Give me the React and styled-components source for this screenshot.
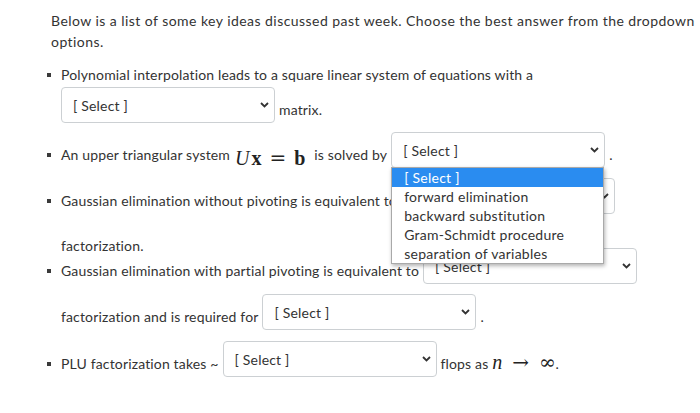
import React from "react";
import styled, { createGlobalStyle } from "styled-components";

const GlobalStyle = createGlobalStyle`
	body {
		margin: 0;
		background: #fff;
		font-family: Lato, "Liberation Sans", sans-serif;
		color: #333;
	}
`;

const Page = styled.div`
	padding: 10px 0 0 51px;
	font-size: 14px;
`;

const Intro = styled.p`
	margin: 0;
	width: 649px;
	line-height: 21px;
	letter-spacing: 0.45px;
`;

const List = styled.ul`
	list-style: none;
	margin: 12px 0 0;
	padding: 0 0 0 10px;
	letter-spacing: 0.15px;
`;

const Item = styled.li`
	margin-top: ${(p) => p.$mt || 0}px;
`;

const Row = styled.div`
	display: flex;
	align-items: center;
	gap: 4px;
	margin-top: ${(p) => p.$mt || 0}px;
`;

const Bullet = styled.span`
	width: 4px;
	height: 4px;
	background: #3a3a3a;
	margin: ${(p) => (p.$low ? 9 : 0)}px 6px 0 -14px;
	flex: none;
`;

const Text = styled.span`
	line-height: 21px;
	white-space: nowrap;
	padding-top: ${(p) => (p.$low ? 9 : 0)}px;
`;

const Math = styled.span`
	font-family: "Liberation Serif", "DejaVu Serif", serif;
	font-size: 20px;
	line-height: 0;
	letter-spacing: 0;
	vertical-align: ${(p) => p.$drop || 0}px;
	margin: 0 ${(p) => p.$mr || 0}px 0 ${(p) => p.$ml || 0}px;
	color: #222;
`;

const Mi = styled.i`
	font-style: italic;
`;

const Mb = styled.b`
	font-weight: bold;
	margin-left: ${(p) => p.$ml || 0}px;
`;

const Mo = styled.span`
	font-family: "DejaVu Serif", serif;
	font-size: ${(p) => p.$size || 20}px;
	margin: 0 ${(p) => p.$space ?? 6}px;
`;

const SelectWrap = styled.div`
	position: relative;
	flex: none;
`;

const SelectBox = styled.div`
	box-sizing: border-box;
	width: 214px;
	height: 36px;
	border: 1px solid #ccd0d3;
	border-radius: 4px;
	background: #fff;
	display: flex;
	align-items: center;
	justify-content: space-between;
	padding: 0 5px 0 11px;
	color: #333;
	font-size: 14px;
	letter-spacing: 0.2px;
`;

const Chevron = () => (
	<svg width="9" height="6" viewBox="0 0 9 6">
		<path d="M1 1 L4.5 4.5 L8 1" fill="none" stroke="#333" strokeWidth="1.8" />
	</svg>
);

const Options = styled.ul`
	position: absolute;
	top: 35px;
	left: 0;
	width: 213px;
	box-sizing: border-box;
	margin: 0;
	padding: 0;
	list-style: none;
	background: #fff;
	border: 1px solid #a9a9a9;
	box-shadow: 1px 2px 4px rgba(0, 0, 0, 0.3);
	z-index: 10;
	letter-spacing: 0.25px;
`;

const Option = styled.li`
	height: 19px;
	line-height: 19px;
	padding-left: 12px;
	font-size: 14px;
	white-space: nowrap;
	color: ${(p) => (p.$active ? "#fff" : "#333")};
	background: ${(p) => (p.$active ? "#2a8cf0" : "transparent")};
`;

const Select = ({ open }) => (
	<SelectWrap>
		<SelectBox>
			<span>[ Select ]</span>
			<Chevron />
		</SelectBox>
		{open && (
			<Options>
				<Option $active>[ Select ]</Option>
				<Option>forward elimination</Option>
				<Option>backward substitution</Option>
				<Option>Gram-Schmidt procedure</Option>
				<Option>separation of variables</Option>
			</Options>
		)}
	</SelectWrap>
);

const App = () => {
	return (
		<Page>
			<GlobalStyle />
			<Intro>
				Below is a list of some key ideas discussed past week. Choose the best answer from the dropdown
				options.
			</Intro>
			<List>
				<Item>
					<Row>
						<Bullet />
						<Text>Polynomial interpolation leads to a square linear system of equations with a</Text>
					</Row>
					<Row $mt={2}>
						<Select />
						<Text $low>matrix.</Text>
					</Row>
				</Item>
				<Item $mt={9}>
					<Row>
						<Bullet $low />
						<Text $low>
							An upper triangular system
							<Math $drop={-5} $ml={5} $mr={9}>
								<Mi>U</Mi>
								<Mb $ml={2}>x</Mb>
								<Mo $space={8}>=</Mo>
								<Mb>b</Mb>
							</Math>
							is solved by
						</Text>
						<Select open />
						<Text $low>.</Text>
					</Row>
				</Item>
				<Item $mt={10}>
					<Row>
						<Bullet $low />
						<Text $low>Gaussian elimination without pivoting is equivalent to</Text>
						<Select />
					</Row>
					<Row $mt={21}>
						<Text>factorization.</Text>
					</Row>
				</Item>
				<Item $mt={-8}>
					<Row>
						<Bullet $low />
						<Text $low>Gaussian elimination with partial pivoting is equivalent to</Text>
						<Select />
					</Row>
					<Row $mt={10}>
						<Text $low>factorization and is required for</Text>
						<Select />
						<Text $low>.</Text>
					</Row>
				</Item>
				<Item $mt={11}>
					<Row>
						<Bullet $low />
						<Text $low>PLU factorization takes ~</Text>
						<Select />
						<Text $low>
							flops as{" "}
							<Math>
								<Mi>n</Mi>
								<Mo $space={10} $size={20}>→</Mo>
								<Mo $space={0} $size={20}>∞</Mo>
							</Math>
							.
						</Text>
					</Row>
				</Item>
			</List>
		</Page>
	);
};

export default App;
